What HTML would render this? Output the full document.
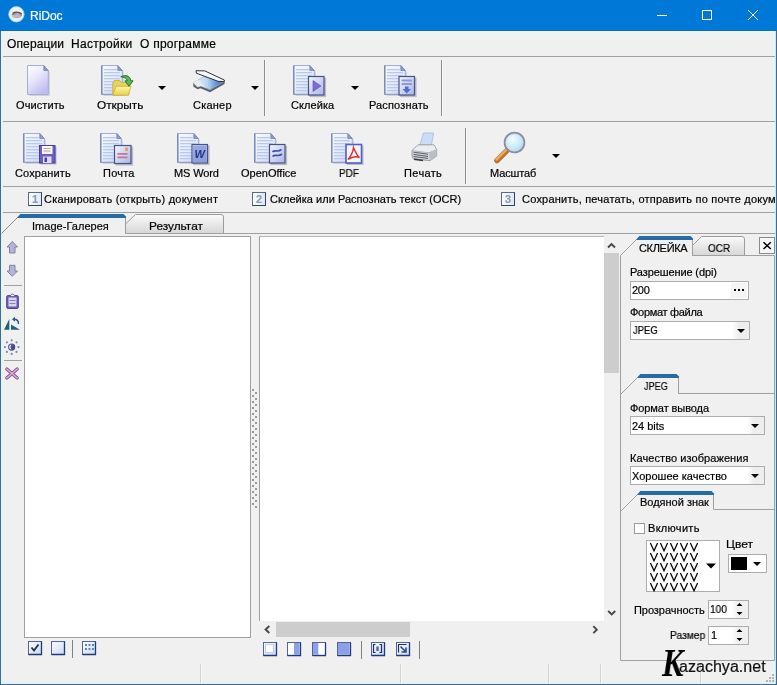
<!DOCTYPE html>
<html><head><meta charset="utf-8"><title>RiDoc</title>
<style>
html,body{margin:0;padding:0;}
body{width:777px;height:685px;position:relative;overflow:hidden;background:#f0f0f0;font-family:"Liberation Sans","DejaVu Sans",sans-serif;font-size:11px;color:#000;}
.a{position:absolute;}
.t{position:absolute;white-space:nowrap;line-height:14px;font-size:11px;will-change:transform;-webkit-text-stroke:0.2px currentColor;}
.m{position:absolute;white-space:nowrap;line-height:15px;font-size:12px;letter-spacing:0.2px;}
.tb{position:absolute;white-space:nowrap;line-height:14px;text-align:center;font-size:11px;width:90px;}
.hl{position:absolute;height:1px;background:#a0a0a0;}
.vl{position:absolute;width:1px;background:#a0a0a0;}
.ar{position:absolute;width:0;height:0;border-left:4px solid transparent;border-right:4px solid transparent;border-top:4px solid #000;}
.inp{position:absolute;background:#fff;border:1px solid #abadb3;box-sizing:border-box;}
.tabb{position:absolute;height:4px;background:#2b6cb0;border-radius:3px 3px 0 0;}
</style></head><body>
<div class="a" style="left:0;top:0;width:777px;height:30px;background:#0078d7;"></div>
<div class="a" style="left:0;top:30px;width:777px;height:1px;background:#26679a;"></div>
<div class="a" style="left:1px;top:31px;width:775px;height:1px;background:#d5fbff;"></div>
<div class="a" style="left:2px;top:32px;width:773px;height:1px;background:#e9f3fa;"></div>
<div class="t" style="left:30px;top:9px;font-size:12px;line-height:15px;letter-spacing:-0.03px;color:#fff;">RiDoc</div>
<div class="a" style="left:0;top:31px;width:1px;height:654px;background:#466b82;"></div>
<div class="a" style="left:1px;top:31px;width:1px;height:653px;background:#d9f8ff;"></div>
<div class="a" style="left:2px;top:32px;width:1px;height:651px;background:#e6f3f6;"></div>
<div class="a" style="left:776px;top:31px;width:1px;height:654px;background:#3d6b96;z-index:5;"></div>
<div class="a" style="left:775px;top:31px;width:1px;height:653px;background:#c8e8fa;z-index:5;"></div>
<div class="a" style="left:1px;top:683px;width:775px;height:1px;background:#d9f4fd;"></div>
<div class="a" style="left:0;top:684px;width:777px;height:1px;background:#3d6b96;"></div>
<div class="t" style="left:7px;top:37px;font-size:12px;line-height:15px;letter-spacing:0.13px;">Операции</div>
<div class="t" style="left:71px;top:37px;font-size:12px;line-height:15px;letter-spacing:0.3px;">Настройки</div>
<div class="t" style="left:140px;top:37px;font-size:12px;line-height:15px;letter-spacing:0.24px;">О программе</div>
<div class="hl" style="left:3px;top:56px;width:772px;"></div>
<div class="hl" style="left:3px;top:121px;width:772px;"></div>
<div class="hl" style="left:3px;top:186px;width:772px;"></div>
<div class="hl" style="left:3px;top:212px;width:772px;"></div>
<div class="t" style="left:16px;top:98px;font-size:11px;line-height:14px;letter-spacing:0.1px;">Очистить</div>
<div class="t" style="left:97px;top:98px;font-size:11px;line-height:14px;transform:scaleX(1.074);transform-origin:0 0;">Открыть</div>
<div class="t" style="left:193px;top:98px;font-size:11px;line-height:14px;letter-spacing:0.22px;">Сканер</div>
<div class="t" style="left:291px;top:98px;font-size:11px;line-height:14px;letter-spacing:0.08px;">Склейка</div>
<div class="t" style="left:369px;top:98px;font-size:11px;line-height:14px;letter-spacing:0.14px;">Распознать</div>
<div class="vl" style="left:264px;top:60px;height:56px;background:#8c8c8c;"></div>
<div class="vl" style="left:265px;top:60px;height:56px;background:#f9f9f9;"></div>
<div class="vl" style="left:441px;top:60px;height:56px;background:#8c8c8c;"></div>
<div class="vl" style="left:442px;top:60px;height:56px;background:#f9f9f9;"></div>
<div class="t" style="left:15px;top:166px;font-size:11px;line-height:14px;letter-spacing:0.12px;">Сохранить</div>
<div class="t" style="left:103px;top:166px;font-size:11px;line-height:14px;letter-spacing:0.22px;">Почта</div>
<div class="t" style="left:174px;top:166px;font-size:11px;line-height:14px;letter-spacing:-0.12px;">MS Word</div>
<div class="t" style="left:241px;top:166px;font-size:11px;line-height:14px;">OpenOffice</div>
<div class="t" style="left:339px;top:166px;font-size:11px;line-height:14px;transform:scaleX(0.905);transform-origin:0 0;">PDF</div>
<div class="t" style="left:404px;top:166px;font-size:11px;line-height:14px;letter-spacing:0.36px;">Печать</div>
<div class="t" style="left:490px;top:166px;font-size:11px;line-height:14px;letter-spacing:-0.12px;">Масштаб</div>
<div class="vl" style="left:465px;top:128px;height:56px;background:#8c8c8c;"></div>
<div class="vl" style="left:466px;top:128px;height:56px;background:#f9f9f9;"></div>
<div class="ar" style="left:158px;top:86px;"></div>
<div class="ar" style="left:251px;top:86px;"></div>
<div class="ar" style="left:351px;top:86px;"></div>
<div class="ar" style="left:552px;top:154px;"></div>
<div class="a" style="left:28px;top:192px;width:14px;height:14px;box-sizing:border-box;border:1px solid #5a6a8c;border-right-color:#33425f;border-bottom-color:#33425f;background:linear-gradient(90deg,#fbfdff 0%,#eef3fc 55%,#dde7f8 100%);"></div>
<div class="t" style="left:28px;top:192px;width:14px;text-align:center;color:#8c9cba;font-size:11px;font-weight:bold;">1</div>
<div class="t" style="left:44px;top:192px;font-size:11px;line-height:14px;letter-spacing:0.22px;">Сканировать (открыть) документ</div>
<div class="a" style="left:252px;top:192px;width:14px;height:14px;box-sizing:border-box;border:1px solid #5a6a8c;border-right-color:#33425f;border-bottom-color:#33425f;background:linear-gradient(90deg,#fbfdff 0%,#eef3fc 55%,#dde7f8 100%);"></div>
<div class="t" style="left:252px;top:192px;width:14px;text-align:center;color:#8c9cba;font-size:11px;font-weight:bold;">2</div>
<div class="t" style="left:270px;top:192px;font-size:11px;line-height:14px;letter-spacing:0.03px;">Склейка или Распознать текст (OCR)</div>
<div class="a" style="left:501px;top:192px;width:14px;height:14px;box-sizing:border-box;border:1px solid #5a6a8c;border-right-color:#33425f;border-bottom-color:#33425f;background:linear-gradient(90deg,#fbfdff 0%,#eef3fc 55%,#dde7f8 100%);"></div>
<div class="t" style="left:501px;top:192px;width:14px;text-align:center;color:#8c9cba;font-size:11px;font-weight:bold;">3</div>
<div class="t" style="left:522px;top:192px;font-size:11px;line-height:14px;letter-spacing:0.22px;">Сохранить, печатать, отправить по почте документ</div>
<svg class="a" style="left:0;top:211px" width="777" height="30" viewBox="0 211 777 30"><defs><linearGradient id="gtab" x1="0" y1="0" x2="0" y2="1"><stop offset="0" stop-color="#fafafa"/><stop offset="1" stop-color="#d6d6d6"/></linearGradient></defs><path d="M125.500,233.500 V224 L135.500,214.500 H221 Q223.500,214.500 223.500,217 V233.500 Z" fill="url(#gtab)" stroke="#9c9c9c" stroke-width="1"/><path d="M125,233.500 H775" stroke="#a0a0a0" stroke-width="1"/><path d="M1,236 L1,233 L17,217 H125 V236 Z" fill="#f0f0f0"/><path d="M1.500,233.500 L17.500,217.500" stroke="#8c8c8c" stroke-width="1" fill="none"/><path d="M125.500,218 V233.500" stroke="#9c9c9c" stroke-width="1"/><path d="M16.800,218 L20.300,214 H123.500 L126,216.500 V218 Z" fill="#2a6aa2"/><path d="M20,213.500 H124 M17.500,218.500 H125" stroke="#e2f5fd" stroke-width="1" fill="none"/></svg>
<div class="t" style="left:32px;top:219px;font-size:11px;line-height:14px;letter-spacing:0.03px;">Image-Галерея</div>
<div class="t" style="left:149px;top:219px;font-size:11px;line-height:14px;transform:scaleX(1.078);transform-origin:0 0;">Результат</div>
<div class="a" style="left:24px;top:236px;width:227px;height:402px;background:#fff;border:1px solid #a0a0a0;box-sizing:border-box;"></div>
<div class="a" style="left:259px;top:236px;width:345px;height:385px;background:#fff;border-left:1px solid #a0a0a0;border-top:1px solid #b8b8b8;box-sizing:border-box;"></div>
<div class="a" style="left:604px;top:253px;width:15px;height:120px;background:#cdcdcd;"></div>
<div class="a" style="left:276px;top:622px;width:134px;height:15px;background:#cdcdcd;"></div>
<svg class="a" style="left:0;top:0" width="777" height="685" viewBox="0 0 777 685" fill="none" stroke="#484848" stroke-width="1.9"><path d="M608,247.500 L611.500,244 L615,247.500"/><path d="M608.200,611 L611.700,614.500 L615.200,611"/><path d="M269.300,626 L265.600,629.500 L269.300,633"/><path d="M593.300,626.200 L596.800,629.700 L593.300,633.200"/></svg>
<svg class="a" style="left:0;top:0" width="777" height="685" viewBox="0 0 777 685" fill="#9a9a9a"><rect x="252" y="389" width="2" height="2"/><rect x="255" y="392" width="2" height="2"/><rect x="252" y="395" width="2" height="2"/><rect x="255" y="398" width="2" height="2"/><rect x="252" y="401" width="2" height="2"/><rect x="255" y="404" width="2" height="2"/><rect x="252" y="407" width="2" height="2"/><rect x="255" y="410" width="2" height="2"/><rect x="252" y="413" width="2" height="2"/><rect x="255" y="416" width="2" height="2"/><rect x="252" y="419" width="2" height="2"/><rect x="255" y="422" width="2" height="2"/><rect x="252" y="425" width="2" height="2"/><rect x="255" y="428" width="2" height="2"/><rect x="252" y="431" width="2" height="2"/><rect x="255" y="434" width="2" height="2"/><rect x="252" y="437" width="2" height="2"/><rect x="255" y="440" width="2" height="2"/><rect x="252" y="443" width="2" height="2"/><rect x="255" y="446" width="2" height="2"/><rect x="252" y="449" width="2" height="2"/><rect x="255" y="452" width="2" height="2"/><rect x="252" y="455" width="2" height="2"/><rect x="255" y="458" width="2" height="2"/><rect x="252" y="461" width="2" height="2"/><rect x="255" y="464" width="2" height="2"/><rect x="252" y="467" width="2" height="2"/><rect x="255" y="470" width="2" height="2"/><rect x="252" y="473" width="2" height="2"/><rect x="255" y="476" width="2" height="2"/><rect x="252" y="479" width="2" height="2"/><rect x="255" y="482" width="2" height="2"/><rect x="252" y="485" width="2" height="2"/><rect x="255" y="488" width="2" height="2"/><rect x="252" y="491" width="2" height="2"/><rect x="255" y="494" width="2" height="2"/><rect x="252" y="497" width="2" height="2"/><rect x="255" y="500" width="2" height="2"/><rect x="252" y="503" width="2" height="2"/><rect x="255" y="506" width="2" height="2"/></svg>
<svg class="a" style="left:0;top:0" width="777" height="31" viewBox="0 0 777 31" fill="none" stroke="#fff" stroke-width="1"><path d="M657,15.500 H667"/><rect x="702.500" y="10.500" width="9" height="9"/><path d="M748,10 L758,20 M758,10 L748,20"/></svg>
<svg class="a" style="left:0;top:0" width="777" height="685" viewBox="0 0 777 685"><defs>
<linearGradient id="gdb" x1="0" y1="0" x2="0.6" y2="1"><stop offset="0" stop-color="#ffffff"/><stop offset="0.45" stop-color="#ebe9fc"/><stop offset="1" stop-color="#c1bdf0"/></linearGradient>
<linearGradient id="gdl" x1="0" y1="0" x2="0.8" y2="1"><stop offset="0" stop-color="#f7faff"/><stop offset="0.6" stop-color="#e4ebfb"/><stop offset="1" stop-color="#cdd7f4"/></linearGradient>
<linearGradient id="gov" x1="0" y1="0" x2="1" y2="1"><stop offset="0" stop-color="#f4f6ff"/><stop offset="1" stop-color="#a9b4ea"/></linearGradient>
<linearGradient id="gfold" x1="0" y1="0" x2="0" y2="1"><stop offset="0" stop-color="#fdf6a8"/><stop offset="1" stop-color="#e8d24c"/></linearGradient>
<linearGradient id="gsc" x1="0" y1="0" x2="1" y2="0"><stop offset="0" stop-color="#eef4fa"/><stop offset="0.45" stop-color="#b8d4f0"/><stop offset="0.75" stop-color="#5a94dc"/><stop offset="1" stop-color="#2f66b8"/></linearGradient>
<radialGradient id="glens" cx="0.4" cy="0.35" r="0.7"><stop offset="0" stop-color="#f4fdff"/><stop offset="0.7" stop-color="#bfe8f6"/><stop offset="1" stop-color="#9fd4ec"/></radialGradient>
<linearGradient id="gbtn" x1="0" y1="0" x2="1" y2="1"><stop offset="0" stop-color="#ffffff"/><stop offset="1" stop-color="#c9d6f4"/></linearGradient>
</defs><g transform="translate(27,65)"><path d="M1.5,1 H16.8 L21.8,6 V30 H1.5 Z" fill="#9090a8" opacity="0.30" transform="translate(1.1,1.1)"/><path d="M0.5,0.5 H16.8 L21.3,5.5 V29.5 H0.5 Z" fill="url(#gdb)" stroke="#a3aed2" stroke-width="1"/><path d="M16.8,0.5 V5.5 H21.3 Z" fill="#8c9ccc" stroke="#6f7ea8" stroke-width="0.7"/></g><g transform="translate(101,65)"><path d="M1.5,1 H16.8 L21.8,6 V30 H1.5 Z" fill="#9090a8" opacity="0.30" transform="translate(1.1,1.1)"/><path d="M0.5,0.5 H16.8 L21.3,5.5 V29.5 H0.5 Z" fill="url(#gdl)" stroke="#a3aed2" stroke-width="1"/><rect x="3" y="4" width="12.8" height="1.3" fill="#b9c9ee"/><rect x="3" y="7" width="15.8" height="1.3" fill="#b9c9ee"/><rect x="3" y="10" width="15.8" height="1.3" fill="#b9c9ee"/><rect x="3" y="13" width="15.8" height="1.3" fill="#b9c9ee"/><rect x="3" y="16" width="15.8" height="1.3" fill="#b9c9ee"/><rect x="3" y="19" width="15.8" height="1.3" fill="#b9c9ee"/><rect x="3" y="22" width="15.8" height="1.3" fill="#b9c9ee"/><rect x="3" y="25" width="15.8" height="1.3" fill="#b9c9ee"/><rect x="0" y="0.5" width="1.6" height="29" fill="#7685b4" opacity="0.85"/><rect x="0.5" y="28.7" width="20.8" height="1.3" fill="#8e9bc4" opacity="0.8"/><path d="M16.8,0.5 V5.5 H21.3 Z" fill="#8c9ccc" stroke="#6f7ea8" stroke-width="0.7"/></g><g transform="translate(112.300,79.500)"><path d="M0.500,3.500 L2,1 H7.500 L9,3 H16.500 V15.500 H0.500 Z" fill="#e6d25c" stroke="#c4a93a" stroke-width="0.800"/><path d="M0.500,15.700 L3.800,6.800 H18.800 L16,15.700 Z" fill="url(#gfold)" stroke="#c9ae3a" stroke-width="0.800"/></g><g transform="translate(119.800,74.300)"><path d="M1,2.500 C6,0 10.500,1.500 11,6.500 H13.300 L9.300,12 L5,6.500 H7.500 C7.200,4 4.500,3 1,2.500 Z" fill="#58b854" stroke="#236a25" stroke-width="0.900"/></g><g>
<path d="M193.300,83 L203.500,77 L224.600,81.500 L224.600,84 L210,92.300 L200.500,88.300 L197.500,89.300 L193.300,86.500 Z" fill="#5c6068"/>
<path d="M193.300,82.800 L203.500,76.800 L224.600,81.300 L210,89.800 L201,86 L197.500,87 Z" fill="url(#gsc)" stroke="#aab4c4" stroke-width="0.600"/>
<path d="M193.300,82.800 L198,80 L206,88 L201,86 L197.500,87 Z" fill="#e8ecf2" opacity="0.9"/>
<path d="M196,70.700 L204.800,70.900 L224.300,80 L224.300,81.600 L218,81.300 L196.400,73.200 Z" fill="#f6f8fb" stroke="#2e3038" stroke-width="1"/>
</g><g transform="translate(293,65)"><path d="M1.5,1 H16.8 L21.8,6 V30 H1.5 Z" fill="#9090a8" opacity="0.30" transform="translate(1.1,1.1)"/><path d="M0.5,0.5 H16.8 L21.3,5.5 V29.5 H0.5 Z" fill="url(#gdl)" stroke="#a3aed2" stroke-width="1"/><rect x="3" y="4" width="12.8" height="1.3" fill="#b9c9ee"/><rect x="3" y="7" width="15.8" height="1.3" fill="#b9c9ee"/><rect x="3" y="10" width="15.8" height="1.3" fill="#b9c9ee"/><rect x="3" y="13" width="15.8" height="1.3" fill="#b9c9ee"/><rect x="3" y="16" width="15.8" height="1.3" fill="#b9c9ee"/><rect x="3" y="19" width="15.8" height="1.3" fill="#b9c9ee"/><rect x="3" y="22" width="15.8" height="1.3" fill="#b9c9ee"/><rect x="3" y="25" width="15.8" height="1.3" fill="#b9c9ee"/><rect x="0" y="0.5" width="1.6" height="29" fill="#7685b4" opacity="0.85"/><rect x="0.5" y="28.7" width="20.8" height="1.3" fill="#8e9bc4" opacity="0.8"/><path d="M16.8,0.5 V5.5 H21.3 Z" fill="#8c9ccc" stroke="#6f7ea8" stroke-width="0.7"/></g><g transform="translate(308,76)"><rect x="1.6" y="1.6" width="16.5" height="19.5" fill="#5a5a80" opacity="0.35"/><rect x="0.5" y="0.5" width="15.5" height="18.5" fill="url(#gov)" stroke="#46557f" stroke-width="1.2"/><path d="M5,4.5 L13,10 L5,15.5 Z" fill="#7a6fd0" stroke="#5a50b0" stroke-width="0.6"/></g><g transform="translate(384,65)"><path d="M1.5,1 H16.8 L21.8,6 V30 H1.5 Z" fill="#9090a8" opacity="0.30" transform="translate(1.1,1.1)"/><path d="M0.5,0.5 H16.8 L21.3,5.5 V29.5 H0.5 Z" fill="url(#gdl)" stroke="#a3aed2" stroke-width="1"/><rect x="3" y="4" width="12.8" height="1.3" fill="#b9c9ee"/><rect x="3" y="7" width="15.8" height="1.3" fill="#b9c9ee"/><rect x="3" y="10" width="15.8" height="1.3" fill="#b9c9ee"/><rect x="3" y="13" width="15.8" height="1.3" fill="#b9c9ee"/><rect x="3" y="16" width="15.8" height="1.3" fill="#b9c9ee"/><rect x="3" y="19" width="15.8" height="1.3" fill="#b9c9ee"/><rect x="3" y="22" width="15.8" height="1.3" fill="#b9c9ee"/><rect x="3" y="25" width="15.8" height="1.3" fill="#b9c9ee"/><rect x="0" y="0.5" width="1.6" height="29" fill="#7685b4" opacity="0.85"/><rect x="0.5" y="28.7" width="20.8" height="1.3" fill="#8e9bc4" opacity="0.8"/><path d="M16.8,0.5 V5.5 H21.3 Z" fill="#8c9ccc" stroke="#6f7ea8" stroke-width="0.7"/></g><g transform="translate(398.5,76)"><rect x="1.6" y="1.6" width="16.5" height="19.5" fill="#5a5a80" opacity="0.35"/><rect x="0.5" y="0.5" width="15.5" height="18.5" fill="url(#gov)" stroke="#46557f" stroke-width="1.2"/><rect x="3" y="3.5" width="10.5" height="2" fill="#8f9bd8"/><rect x="3" y="7" width="10.5" height="2" fill="#8f9bd8"/><path d="M6.5,10.5 H10 V13 H12.5 L8.2,17.5 L4,13 H6.5 Z" fill="#4f6fd0"/></g><g transform="translate(23,133)"><path d="M1.5,1 H16.8 L21.8,6 V30 H1.5 Z" fill="#9090a8" opacity="0.30" transform="translate(1.1,1.1)"/><path d="M0.5,0.5 H16.8 L21.3,5.5 V29.5 H0.5 Z" fill="url(#gdl)" stroke="#a3aed2" stroke-width="1"/><rect x="3" y="4" width="12.8" height="1.3" fill="#b9c9ee"/><rect x="3" y="7" width="15.8" height="1.3" fill="#b9c9ee"/><rect x="3" y="10" width="15.8" height="1.3" fill="#b9c9ee"/><rect x="3" y="13" width="15.8" height="1.3" fill="#b9c9ee"/><rect x="3" y="16" width="15.8" height="1.3" fill="#b9c9ee"/><rect x="3" y="19" width="15.8" height="1.3" fill="#b9c9ee"/><rect x="3" y="22" width="15.8" height="1.3" fill="#b9c9ee"/><rect x="3" y="25" width="15.8" height="1.3" fill="#b9c9ee"/><rect x="0" y="0.5" width="1.6" height="29" fill="#7685b4" opacity="0.85"/><rect x="0.5" y="28.7" width="20.8" height="1.3" fill="#8e9bc4" opacity="0.8"/><path d="M16.8,0.5 V5.5 H21.3 Z" fill="#8c9ccc" stroke="#6f7ea8" stroke-width="0.7"/></g><g transform="translate(39,145)"><rect x="1.5" y="1.5" width="16" height="18" fill="#404070" opacity="0.3"/><rect x="0.5" y="0.5" width="15.5" height="17.5" fill="#6a5fc4" stroke="#4a3fa0" stroke-width="1"/><rect x="3" y="1" width="10.5" height="8" fill="#f6f6ff"/><rect x="4.5" y="3" width="7" height="1" fill="#c0a0a0"/><rect x="4.5" y="5.5" width="7" height="1" fill="#c0a0a0"/><rect x="4" y="11.5" width="8.5" height="6.5" fill="#dcdcf4"/><rect x="5.5" y="12.5" width="2.5" height="4.5" fill="#4a3fa0"/></g><g transform="translate(100,133)"><path d="M1.5,1 H16.8 L21.8,6 V30 H1.5 Z" fill="#9090a8" opacity="0.30" transform="translate(1.1,1.1)"/><path d="M0.5,0.5 H16.8 L21.3,5.5 V29.5 H0.5 Z" fill="url(#gdl)" stroke="#a3aed2" stroke-width="1"/><rect x="3" y="4" width="12.8" height="1.3" fill="#b9c9ee"/><rect x="3" y="7" width="15.8" height="1.3" fill="#b9c9ee"/><rect x="3" y="10" width="15.8" height="1.3" fill="#b9c9ee"/><rect x="3" y="13" width="15.8" height="1.3" fill="#b9c9ee"/><rect x="3" y="16" width="15.8" height="1.3" fill="#b9c9ee"/><rect x="3" y="19" width="15.8" height="1.3" fill="#b9c9ee"/><rect x="3" y="22" width="15.8" height="1.3" fill="#b9c9ee"/><rect x="3" y="25" width="15.8" height="1.3" fill="#b9c9ee"/><rect x="0" y="0.5" width="1.6" height="29" fill="#7685b4" opacity="0.85"/><rect x="0.5" y="28.7" width="20.8" height="1.3" fill="#8e9bc4" opacity="0.8"/><path d="M16.8,0.5 V5.5 H21.3 Z" fill="#8c9ccc" stroke="#6f7ea8" stroke-width="0.7"/></g><g transform="translate(114,145)"><rect x="1.6" y="1.6" width="17.5" height="19" fill="#5a5a80" opacity="0.35"/><rect x="0.5" y="0.5" width="16.5" height="18" fill="url(#gov)" stroke="#46557f" stroke-width="1.2"/><rect x="3.5" y="8" width="10" height="1.8" fill="#c07c8c"/><rect x="3.5" y="11.5" width="10" height="1.8" fill="#c07c8c"/><rect x="11" y="2.5" width="3" height="3.5" fill="#e8a070"/></g><g transform="translate(177,133)"><path d="M1.5,1 H16.8 L21.8,6 V30 H1.5 Z" fill="#9090a8" opacity="0.30" transform="translate(1.1,1.1)"/><path d="M0.5,0.5 H16.8 L21.3,5.5 V29.5 H0.5 Z" fill="url(#gdl)" stroke="#a3aed2" stroke-width="1"/><rect x="3" y="4" width="12.8" height="1.3" fill="#b9c9ee"/><rect x="3" y="7" width="15.8" height="1.3" fill="#b9c9ee"/><rect x="3" y="10" width="15.8" height="1.3" fill="#b9c9ee"/><rect x="3" y="13" width="15.8" height="1.3" fill="#b9c9ee"/><rect x="3" y="16" width="15.8" height="1.3" fill="#b9c9ee"/><rect x="3" y="19" width="15.8" height="1.3" fill="#b9c9ee"/><rect x="3" y="22" width="15.8" height="1.3" fill="#b9c9ee"/><rect x="3" y="25" width="15.8" height="1.3" fill="#b9c9ee"/><rect x="0" y="0.5" width="1.6" height="29" fill="#7685b4" opacity="0.85"/><rect x="0.5" y="28.7" width="20.8" height="1.3" fill="#8e9bc4" opacity="0.8"/><path d="M16.8,0.5 V5.5 H21.3 Z" fill="#8c9ccc" stroke="#6f7ea8" stroke-width="0.7"/></g><g transform="translate(191.5,144)"><rect x="1.6" y="1.6" width="16.5" height="19.5" fill="#5a5a80" opacity="0.35"/><rect x="0.5" y="0.5" width="15.5" height="18.5" fill="url(#gov)" stroke="#46557f" stroke-width="1.2"/><rect x="1.5" y="1.5" width="13.5" height="16.5" fill="#7f90dc" opacity="0.75"/><text x="8.3" y="13.8" text-anchor="middle" font-family="Liberation Sans, sans-serif" font-size="11" font-weight="bold" font-style="italic" fill="#27357f">W</text></g><g transform="translate(254,133)"><path d="M1.5,1 H16.8 L21.8,6 V30 H1.5 Z" fill="#9090a8" opacity="0.30" transform="translate(1.1,1.1)"/><path d="M0.5,0.5 H16.8 L21.3,5.5 V29.5 H0.5 Z" fill="url(#gdl)" stroke="#a3aed2" stroke-width="1"/><rect x="3" y="4" width="12.8" height="1.3" fill="#b9c9ee"/><rect x="3" y="7" width="15.8" height="1.3" fill="#b9c9ee"/><rect x="3" y="10" width="15.8" height="1.3" fill="#b9c9ee"/><rect x="3" y="13" width="15.8" height="1.3" fill="#b9c9ee"/><rect x="3" y="16" width="15.8" height="1.3" fill="#b9c9ee"/><rect x="3" y="19" width="15.8" height="1.3" fill="#b9c9ee"/><rect x="3" y="22" width="15.8" height="1.3" fill="#b9c9ee"/><rect x="3" y="25" width="15.8" height="1.3" fill="#b9c9ee"/><rect x="0" y="0.5" width="1.6" height="29" fill="#7685b4" opacity="0.85"/><rect x="0.5" y="28.7" width="20.8" height="1.3" fill="#8e9bc4" opacity="0.8"/><path d="M16.8,0.5 V5.5 H21.3 Z" fill="#8c9ccc" stroke="#6f7ea8" stroke-width="0.7"/></g><g transform="translate(269,144)"><rect x="1.6" y="1.6" width="16.5" height="19.5" fill="#5a5a80" opacity="0.35"/><rect x="0.5" y="0.5" width="15.5" height="18.5" fill="url(#gov)" stroke="#46557f" stroke-width="1.2"/><path d="M3.5,8 C6,5 8,9 12.5,5.5 M3.5,12.5 C6.5,9.5 8.5,13.5 13,10" fill="none" stroke="#3f4fa8" stroke-width="1.6"/></g><g transform="translate(331,133)"><path d="M1.5,1 H16.8 L21.8,6 V30 H1.5 Z" fill="#9090a8" opacity="0.30" transform="translate(1.1,1.1)"/><path d="M0.5,0.5 H16.8 L21.3,5.5 V29.5 H0.5 Z" fill="url(#gdl)" stroke="#a3aed2" stroke-width="1"/><rect x="3" y="4" width="12.8" height="1.3" fill="#b9c9ee"/><rect x="3" y="7" width="15.8" height="1.3" fill="#b9c9ee"/><rect x="3" y="10" width="15.8" height="1.3" fill="#b9c9ee"/><rect x="3" y="13" width="15.8" height="1.3" fill="#b9c9ee"/><rect x="3" y="16" width="15.8" height="1.3" fill="#b9c9ee"/><rect x="3" y="19" width="15.8" height="1.3" fill="#b9c9ee"/><rect x="3" y="22" width="15.8" height="1.3" fill="#b9c9ee"/><rect x="3" y="25" width="15.8" height="1.3" fill="#b9c9ee"/><rect x="0" y="0.5" width="1.6" height="29" fill="#7685b4" opacity="0.85"/><rect x="0.5" y="28.7" width="20.8" height="1.3" fill="#8e9bc4" opacity="0.8"/><path d="M16.8,0.5 V5.5 H21.3 Z" fill="#8c9ccc" stroke="#6f7ea8" stroke-width="0.7"/></g><g transform="translate(345.5,144)"><rect x="1.5" y="1.5" width="16.5" height="19.5" fill="#404070" opacity="0.3"/><rect x="0.5" y="0.5" width="15.5" height="18.5" fill="#f4f4fc" stroke="#4f63c4" stroke-width="1.6"/><path d="M8,3.5 C9.5,7 11,11 14,13.5 C10,12 6,13 2.5,15.5 C5.5,12 7.5,8 8,3.5 Z" fill="none" stroke="#d8342c" stroke-width="1.5"/></g><g transform="translate(410,131)">
<path d="M13.400,2 L23.600,2 L21.400,14.500 L9.800,14 Z" fill="#cbdcf8" stroke="#9fb4dc" stroke-width="0.7"/>
<path d="M2,19.500 L8,14 L24,14 L26.700,18.500 L26.700,25 L20,29.700 L3,27.700 L2,25 Z" fill="#d2d5da" stroke="#888c94" stroke-width="0.8"/>
<path d="M2,19.500 L8,14 L24,14 L26.700,18.500 L19,21.800 Z" fill="#eceef0" stroke="#9a9ea6" stroke-width="0.6"/>
<path d="M19,21.800 L26.700,18.500 V25 L20,29.700 Z" fill="#b9bdc4"/>
<path d="M3.500,21.200 L18,23.200 M3.500,23.400 L18,25.400 M3.500,25.500 L18,27.400" stroke="#5a5e66" stroke-width="1" fill="none"/>
<path d="M4,28.300 L13,29.600" stroke="#33363c" stroke-width="1.500"/>
</g><g>
<path d="M506.5,151 L497,160.500" stroke="#b8742c" stroke-width="5.5" stroke-linecap="round"/>
<path d="M506,150 L496.500,159.500" stroke="#eaa860" stroke-width="2.5" stroke-linecap="round"/>
<circle cx="514.5" cy="142.5" r="9.8" fill="url(#glens)" stroke="#8c8ca4" stroke-width="2"/>
<circle cx="514.5" cy="142.5" r="8.6" fill="none" stroke="#d8d8e4" stroke-width="0.8"/>
</g></svg>
<svg class="a" style="left:0;top:0" width="777" height="685" viewBox="0 0 777 685"><path d="M692.500,255.500 V245.500 L701.500,236.500 H742 Q744.500,236.500 744.500,239 V255.500 Z" fill="url(#gtab)" stroke="#9c9c9c" stroke-width="1"/><path d="M620.500,660.500 V255.500 L636.500,239.500 M692.500,240 V255.500 H774.500 V660.500 H620.500" fill="none" stroke="#a0a0a0" stroke-width="1"/><path d="M635.800,240 L639.300,236 H690.500 L693,238.500 V240 Z" fill="#2a6aa2"/><path d="M639,235.500 H691 M636.500,240.500 H692 M640,373.500 H677 M637.500,378.500 H678 M640,490.500 H712 M637.500,495.500 H713" stroke="#e2f5fd" stroke-width="1" fill="none"/><path d="M620.500,394.500 L637,378 M678.500,378 V393.500 H774" fill="none" stroke="#a0a0a0" stroke-width="1"/><path d="M636.800,378 L640.300,374 H676.500 L679,376.500 V378 Z" fill="#2a6aa2"/><path d="M620.500,511.500 L637,495 M713.500,495 V509.500 H774" fill="none" stroke="#a0a0a0" stroke-width="1"/><path d="M636.800,495 L640.300,491 H711.500 L714,493.500 V495 Z" fill="#2a6aa2"/></svg>
<div class="t" style="left:639px;top:241px;font-size:11px;line-height:14px;letter-spacing:-0.32px;">СКЛЕЙКА</div>
<div class="t" style="left:708px;top:241px;font-size:11px;line-height:14px;transform:scaleX(0.909);transform-origin:0 0;">OCR</div>
<div class="a" style="left:759px;top:237px;width:16px;height:17px;box-sizing:border-box;border:1px solid #8a8a8a;background:#f6f6f6;"></div>
<svg class="a" style="left:759px;top:237px" width="17" height="17" viewBox="0 0 17 17"><path d="M4.500,5.300 L11.800,12 M11.800,5.300 L4.500,12" stroke="#000" stroke-width="1.5"/></svg>
<div class="t" style="left:630px;top:265px;font-size:11px;line-height:14px;letter-spacing:-0.11px;">Разрешение (dpi)</div>
<div class="inp" style="left:630px;top:281px;width:119px;height:19px;"></div>
<div class="t" style="left:632px;top:283px;font-size:11px;line-height:14px;letter-spacing:-0.3px;">200</div>
<div class="a" style="left:731px;top:283px;width:16px;height:15px;background:#f4f4f4;"></div>
<svg class="a" style="left:731px;top:283px" width="16" height="15"><rect x="3" y="6" width="2" height="2"/><rect x="7" y="6" width="2" height="2"/><rect x="11" y="6" width="2" height="2"/></svg>
<div class="t" style="left:630px;top:305px;font-size:11px;line-height:14px;letter-spacing:-0.3px;">Формат файла</div>
<div class="inp" style="left:630px;top:321px;width:120px;height:19px;"></div>
<div class="a" style="left:732px;top:322px;width:17px;height:17px;background:linear-gradient(90deg,#fff,#eee 40%);"></div>
<div class="t" style="left:633px;top:323px;font-size:11px;line-height:14px;transform:scaleX(0.861);transform-origin:0 0;">JPEG</div>
<div class="ar" style="left:737px;top:329px;"></div>
<div class="t" style="left:644px;top:379px;font-size:11px;line-height:14px;transform:scaleX(0.829);transform-origin:0 0;">JPEG</div>
<div class="t" style="left:630px;top:401px;font-size:11px;line-height:14px;letter-spacing:-0.08px;">Формат вывода</div>
<div class="inp" style="left:630px;top:416px;width:135px;height:19px;"></div>
<div class="a" style="left:747px;top:417px;width:17px;height:17px;background:linear-gradient(90deg,#fff,#eee 40%);"></div>
<div class="t" style="left:632px;top:419px;font-size:11px;line-height:14px;letter-spacing:-0.02px;">24 bits</div>
<div class="ar" style="left:751px;top:424px;"></div>
<div class="t" style="left:630px;top:451px;font-size:11px;line-height:14px;letter-spacing:0.08px;">Качество изображения</div>
<div class="inp" style="left:630px;top:466px;width:135px;height:19px;"></div>
<div class="a" style="left:747px;top:467px;width:17px;height:17px;background:linear-gradient(90deg,#fff,#eee 40%);"></div>
<div class="t" style="left:632px;top:469px;font-size:11px;line-height:14px;letter-spacing:0.01px;">Хорошее качество</div>
<div class="ar" style="left:751px;top:474px;"></div>
<div class="t" style="left:640px;top:495px;font-size:11px;line-height:14px;letter-spacing:-0.01px;">Водяной знак</div>
<div class="a" style="left:634px;top:523px;width:11px;height:11px;box-sizing:border-box;border:1px solid #9a9a9a;background:#fff;"></div>
<div class="t" style="left:648px;top:521px;font-size:11px;line-height:14px;letter-spacing:0.29px;">Включить</div>
<div class="inp" style="left:646px;top:540px;width:74px;height:52px;"></div>
<svg class="a" style="left:0;top:0" width="777" height="685" viewBox="0 0 777 685"><path d="M650.4,543 L654,550.8 L657.6,543 M660.4,543 L664,550.8 L667.6,543 M670.4,543 L674,550.8 L677.6,543 M680.4,543 L684,550.8 L687.6,543 M690.4,543 L694,550.8 L697.6,543 M650.4,553 L654,560.8 L657.6,553 M660.4,553 L664,560.8 L667.6,553 M670.4,553 L674,560.8 L677.6,553 M680.4,553 L684,560.8 L687.6,553 M690.4,553 L694,560.8 L697.6,553 M650.4,563 L654,570.8 L657.6,563 M660.4,563 L664,570.8 L667.6,563 M670.4,563 L674,570.8 L677.6,563 M680.4,563 L684,570.8 L687.6,563 M690.4,563 L694,570.8 L697.6,563 M650.4,573 L654,580.8 L657.6,573 M660.4,573 L664,580.8 L667.6,573 M670.4,573 L674,580.8 L677.6,573 M680.4,573 L684,580.8 L687.6,573 M690.4,573 L694,580.8 L697.6,573 M650.4,583 L654,590.8 L657.6,583 M660.4,583 L664,590.8 L667.6,583 M670.4,583 L674,590.8 L677.6,583 M680.4,583 L684,590.8 L687.6,583 M690.4,583 L694,590.8 L697.6,583" fill="none" stroke="#000" stroke-width="1.25"/><path d="M706,563.500 H716 L711,568.500 Z" fill="#000"/></svg>
<div class="t" style="left:726px;top:537px;font-size:11px;line-height:14px;transform:scaleX(1.096);transform-origin:0 0;">Цвет</div>
<div class="inp" style="left:728px;top:554px;width:39px;height:19px;"></div>
<div class="a" style="left:731px;top:557px;width:16px;height:13px;background:#000;"></div>
<div class="ar" style="left:753px;top:562px;"></div>
<div class="t" style="left:634px;top:603px;font-size:11px;line-height:14px;letter-spacing:-0.05px;">Прозрачность</div>
<div class="inp" style="left:708px;top:600px;width:41px;height:19px;"></div>
<div class="a" style="left:731px;top:601px;width:17px;height:17px;background:linear-gradient(90deg,#fff,#f0f0f0 40%);"></div>
<div class="t" style="left:710px;top:602px;font-size:11px;line-height:14px;transform:scaleX(0.924);transform-origin:0 0;">100</div>
<div class="t" style="left:670px;top:628px;font-size:11px;line-height:14px;transform:scaleX(0.931);transform-origin:0 0;">Размер</div>
<div class="inp" style="left:708px;top:626px;width:41px;height:19px;"></div>
<div class="a" style="left:731px;top:627px;width:17px;height:17px;background:linear-gradient(90deg,#fff,#f0f0f0 40%);"></div>
<div class="t" style="left:711px;top:628px;font-size:11px;line-height:14px;">1</div>
<svg class="a" style="left:0;top:0" width="777" height="685" viewBox="0 0 777 685" fill="#000"><path d="M736.500,606 L739.500,603 L742.500,606 Z M736.500,612 L739.500,615 L742.500,612 Z"/><path d="M736.500,632 L739.500,629 L742.500,632 Z M736.500,638 L739.500,641 L742.500,638 Z"/></svg>
<div class="t" style="left:679px;top:656px;font-size:16px;line-height:22px;letter-spacing:0.03px;color:#111;z-index:3;">azachya.net</div>
<div class="a" style="left:662px;top:641px;font-family:'Liberation Serif','DejaVu Serif',serif;font-style:italic;font-weight:bold;font-size:39px;line-height:44px;color:#000;z-index:3;will-change:transform;transform:scaleX(0.82);transform-origin:0 0;white-space:nowrap;">K</div>
<svg class="a" style="left:760px;top:670px" width="16" height="14" viewBox="760 670 16 14" fill="#b4b4b4"><rect x="772" y="674" width="2" height="2"/><rect x="769" y="677" width="2" height="2"/><rect x="772" y="677" width="2" height="2"/><rect x="766" y="680" width="2" height="2"/><rect x="769" y="680" width="2" height="2"/><rect x="772" y="680" width="2" height="2"/></svg>
<div class="a" style="left:200px;top:664px;width:1px;height:19px;background:#d2d2d2;"></div>
<div class="a" style="left:201px;top:664px;width:1px;height:19px;background:#f8f8f8;"></div>
<div class="a" style="left:400px;top:664px;width:1px;height:19px;background:#d2d2d2;"></div>
<div class="a" style="left:401px;top:664px;width:1px;height:19px;background:#f8f8f8;"></div>
<div class="a" style="left:548px;top:664px;width:1px;height:19px;background:#d2d2d2;"></div>
<div class="a" style="left:549px;top:664px;width:1px;height:19px;background:#f8f8f8;"></div>
<div class="a" style="left:600px;top:664px;width:1px;height:19px;background:#d2d2d2;"></div>
<div class="a" style="left:601px;top:664px;width:1px;height:19px;background:#f8f8f8;"></div>
<div class="a" style="left:700px;top:664px;width:1px;height:19px;background:#d2d2d2;"></div>
<div class="a" style="left:701px;top:664px;width:1px;height:19px;background:#f8f8f8;"></div>
<svg class="a" style="left:0;top:0" width="777" height="685" viewBox="0 0 777 685"><path d="M12.300,241.500 L17.500,247 H15 V253 H9.500 V247 H7 Z" fill="#b4b4d4" stroke="#7f80a8" stroke-width="1"/><path d="M12.300,276.300 L17.500,271 H15 V265.300 H9.500 V271 H7 Z" fill="#b4b4d4" stroke="#7f80a8" stroke-width="1"/><rect x="4" y="285" width="18" height="1" fill="#a0a0a0"/><rect x="4" y="360" width="18" height="1" fill="#a0a0a0"/><g transform="translate(6,293)"><rect x="0.700" y="2.500" width="11.600" height="13" rx="1.500" fill="#6a60b0" stroke="#4a4090" stroke-width="1"/><rect x="2.500" y="4.500" width="8" height="9" fill="#d8d4f0"/><rect x="3.500" y="7" width="6" height="1" fill="#8a80c0"/><rect x="3.500" y="10" width="6" height="1" fill="#8a80c0"/><path d="M3.500,3.500 Q6.500,-1.500 9.500,3.500 Z" fill="#e8e8f4" stroke="#5a50a0" stroke-width="0.800"/></g><g fill="#1f607f"><path d="M4,329.800 L9.300,319 V329.800 Z"/><path d="M11,329.800 V324.500 L20,329.800 Z"/><path d="M18.500,324 C18.500,320.500 16.500,319.300 14,319.300" fill="none" stroke="#1f607f" stroke-width="1.400"/><path d="M12,319.300 L15,316.800 V321.800 Z"/></g><circle cx="11.700" cy="347.100" r="3.600" fill="#4a4c84"/><path d="M11.700,344.600 A2.500,2.500 0 0 0 11.700,349.600 A3.500,3.500 0 0 1 11.700,344.600 Z" fill="#fff"/><circle cx="18.50" cy="347.10" r="1.1" fill="#7888b8"/><circle cx="16.51" cy="351.91" r="1.1" fill="#7888b8"/><circle cx="11.70" cy="353.90" r="1.1" fill="#7888b8"/><circle cx="6.89" cy="351.91" r="1.1" fill="#7888b8"/><circle cx="4.90" cy="347.10" r="1.1" fill="#7888b8"/><circle cx="6.89" cy="342.29" r="1.1" fill="#7888b8"/><circle cx="11.70" cy="340.30" r="1.1" fill="#7888b8"/><circle cx="16.51" cy="342.29" r="1.1" fill="#7888b8"/><path d="M6.800,369 L17.200,378 M17.200,369 L6.800,378" stroke="#8a4a8a" stroke-width="3.200" stroke-linecap="round"/><path d="M6.800,369 L17.200,378 M17.200,369 L6.800,378" stroke="#d4b4d8" stroke-width="1.600" stroke-linecap="round"/><g transform="translate(28,641)"><rect x="0.500" y="0.500" width="13" height="13" fill="url(#gbtn)" stroke="#52659a" stroke-width="1"/><path d="M0.500,13.5 H13.5 V0.500" fill="none" stroke="#1f3a78" stroke-width="1.3"/><path d="M3.500,6.500 L6,9.500 L10.500,3.500" fill="none" stroke="#1f2f50" stroke-width="1.800"/></g><g transform="translate(51,641)"><rect x="0.500" y="0.500" width="13" height="13" fill="url(#gbtn)" stroke="#52659a" stroke-width="1"/><path d="M0.500,13.5 H13.5 V0.500" fill="none" stroke="#1f3a78" stroke-width="1.3"/></g><g transform="translate(82,641)"><rect x="0.500" y="0.500" width="13" height="13" fill="url(#gbtn)" stroke="#52659a" stroke-width="1"/><path d="M0.500,13.5 H13.5 V0.500" fill="none" stroke="#1f3a78" stroke-width="1.3"/><g fill="#5f86c0"><rect x="3" y="3" width="2" height="2"/><rect x="6.500" y="3" width="2" height="2"/><rect x="10" y="3" width="2" height="2"/><rect x="3" y="7" width="2" height="2"/><rect x="6.500" y="7" width="2" height="2"/><rect x="10" y="7" width="2" height="2"/></g></g><rect x="72" y="640" width="1" height="18" fill="#808080"/><g transform="translate(263,642)"><rect x="0.500" y="0.500" width="13" height="13" fill="url(#gbtn)" stroke="#52659a" stroke-width="1"/><path d="M0.500,13.5 H13.5 V0.500" fill="none" stroke="#1f3a78" stroke-width="1.3"/><rect x="2.500" y="2.500" width="8" height="8" fill="#fff" stroke="#c0d0f0" stroke-width="1"/></g><g transform="translate(287,642)"><rect x="0.500" y="0.500" width="13" height="13" fill="url(#gbtn)" stroke="#52659a" stroke-width="1"/><path d="M0.500,13.5 H13.5 V0.500" fill="none" stroke="#1f3a78" stroke-width="1.3"/><rect x="1" y="1" width="6" height="11.500" fill="#fff"/><rect x="7" y="1" width="5.500" height="11.500" fill="#8aa0e8"/></g><g transform="translate(312,642)"><rect x="0.500" y="0.500" width="13" height="13" fill="url(#gbtn)" stroke="#52659a" stroke-width="1"/><path d="M0.500,13.5 H13.5 V0.500" fill="none" stroke="#1f3a78" stroke-width="1.3"/><rect x="1" y="1" width="5.500" height="11.500" fill="#8aa0e8"/><rect x="6.500" y="1" width="6" height="11.500" fill="#fff"/></g><g transform="translate(337,642)"><rect x="0.500" y="0.500" width="13" height="13" fill="url(#gbtn)" stroke="#52659a" stroke-width="1"/><path d="M0.500,13.5 H13.5 V0.500" fill="none" stroke="#1f3a78" stroke-width="1.3"/><rect x="1" y="1" width="11.500" height="11.500" fill="#8aa0e8"/></g><rect x="361" y="641" width="1" height="18" fill="#808080"/><rect x="419" y="641" width="1" height="18" fill="#808080"/><g transform="translate(371,642)"><rect x="0.500" y="0.500" width="13" height="13" fill="url(#gbtn)" stroke="#52659a" stroke-width="1"/><path d="M0.500,13.5 H13.5 V0.500" fill="none" stroke="#1f3a78" stroke-width="1.3"/><path d="M4.500,2.500 H2.500 V10.500 H4.500 M8.500,2.500 H10.500 V10.500 H8.500" fill="none" stroke="#1f3060" stroke-width="1.200"/><rect x="5.300" y="4.500" width="2.400" height="4.500" fill="#4f68b0"/></g><g transform="translate(396,642)"><rect x="0.500" y="0.500" width="13" height="13" fill="url(#gbtn)" stroke="#52659a" stroke-width="1"/><path d="M0.500,13.5 H13.5 V0.500" fill="none" stroke="#1f3a78" stroke-width="1.3"/><path d="M2.500,10.500 V2.500 H10.500" fill="none" stroke="#1f3060" stroke-width="1.200"/><path d="M4.500,4.500 L9,9 M10,5.500 V10 H5.500" fill="none" stroke="#2f4890" stroke-width="1.600"/></g><circle cx="16.400" cy="14.300" r="7.700" fill="#e6f3fa" stroke="#a8d0ee" stroke-width="0.800"/><ellipse cx="16.800" cy="15" rx="5.200" ry="2.900" fill="#9a8c84"/><ellipse cx="16.300" cy="16" rx="4.500" ry="1.600" fill="#c8bcc0"/><circle cx="17.400" cy="15.300" r="2.200" fill="#c6a8e6"/><path d="M12.500,13.300 Q17,10.800 21.800,13.800" fill="none" stroke="#5e5638" stroke-width="1.300"/></svg>
</body></html>
